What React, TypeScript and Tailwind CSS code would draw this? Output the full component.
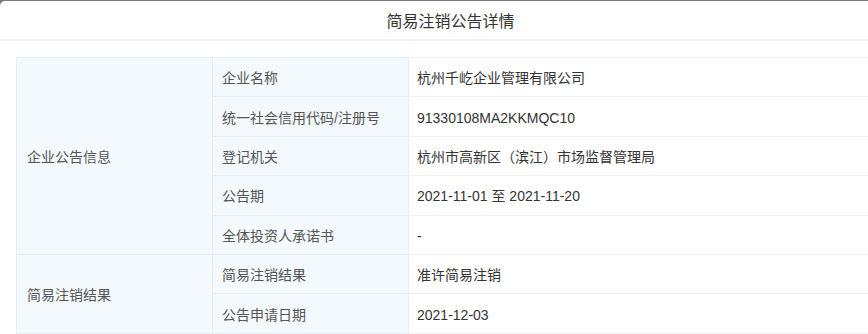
export default function App() {
  const font = { fontFamily: '"Liberation Sans", "Noto Sans CJK SC", sans-serif' };

  const groups = [
    {
      name: "企业公告信息",
      rows: [
        ["企业名称", "杭州千屹企业管理有限公司"],
        ["统一社会信用代码/注册号", "91330108MA2KKMQC10"],
        ["登记机关", "杭州市高新区（滨江）市场监督管理局"],
        ["公告期", "2021-11-01 至 2021-11-20"],
        ["全体投资人承诺书", "-"],
      ],
    },
    {
      name: "简易注销结果",
      rows: [
        ["简易注销结果", "准许简易注销"],
        ["公告申请日期", "2021-12-03"],
      ],
    },
  ];

  return (
    <div className="w-[868px] h-[334px] overflow-hidden bg-[#7a7a7a] pt-px" style={font}>
      <div className="w-[901px] h-[400px] bg-white rounded-t-[5px]">
        <div className="h-[40px] pt-[4px] flex items-center justify-center text-[16px] text-[#333] border-b-2 border-[#f3f3f3]">
          简易注销公告详情
        </div>
        <div className="pt-[16px] pl-4">
          <table className="border-collapse w-[870px] text-[14px]">
            <colgroup>
              <col className="w-[196px]" />
              <col className="w-[196px]" />
              <col />
            </colgroup>
            <tbody>
              {groups.map((g) =>
                g.rows.map((r, i) => (
                  <tr key={g.name + i} className="h-[39.4px]">
                    {i === 0 && (
                      <td
                        rowSpan={g.rows.length}
                        className="border border-[#e7eff6] bg-[#f3f9fd] pl-[10px] pt-[3px] text-[#555] align-middle"
                      >
                        {g.name}
                      </td>
                    )}
                    <td className="border border-[#e7eff6] bg-[#f3f9fd] pl-[9px] pt-[3px] text-[#555]">{r[0]}</td>
                    <td className="border border-[#eef1f4] border-r-0 bg-white pl-[8px] pt-[3px] text-[#333]">{r[1]}</td>
                  </tr>
                ))
              )}
            </tbody>
          </table>
        </div>
      </div>
    </div>
  );
}
